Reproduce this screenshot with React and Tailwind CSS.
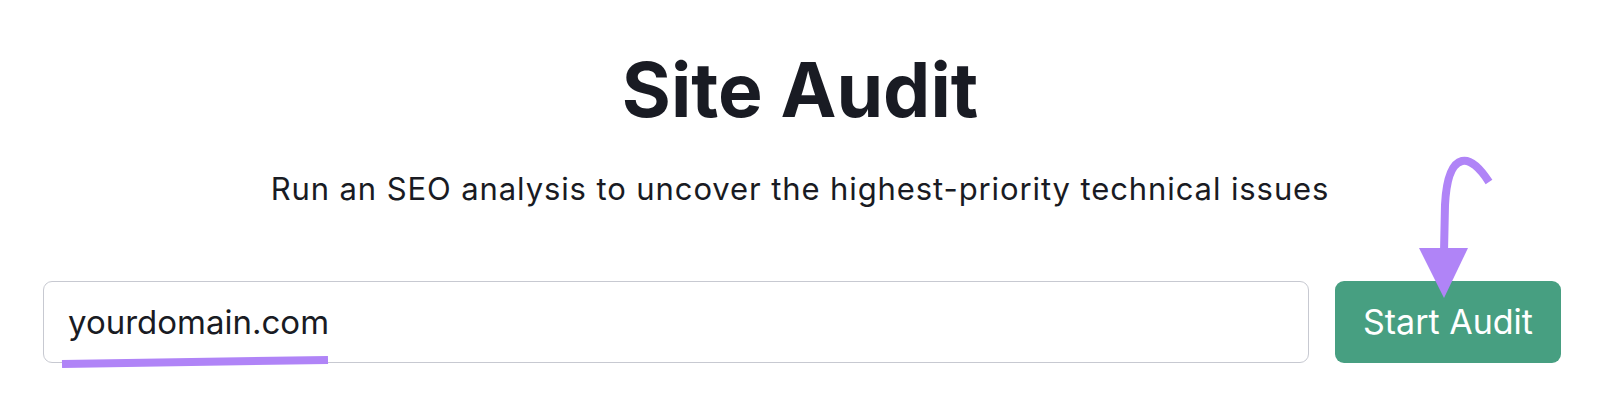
import React from "react";

function App() {
  return (
    <div className="relative w-[1600px] h-[416px] bg-white overflow-hidden font-['Inter',_'Noto_Sans',_sans-serif] text-[#191b23]">
      <div className="flex flex-col items-center">
        <h1 className="mt-[52px] text-[75px] font-bold leading-none">Site Audit</h1>
        <p className="mt-[46px] text-[31px] leading-none tracking-[0.9px]">
          Run an SEO analysis to uncover the highest-priority technical issues
        </p>
      </div>

      <div className="mt-[77px] flex h-[82px] gap-[26px] pl-[43px] pr-[39px]">
        <div className="flex flex-1 items-center rounded-[9px] border-[1.5px] border-[#c7c9d1] pl-[24px]">
          <span className="text-[33px] leading-none">yourdomain.com</span>
        </div>
        <button className="flex w-[226px] items-center justify-center rounded-[9px] bg-[#479f81] text-[34px] leading-none text-white">
          Start Audit
        </button>
      </div>

      {/* annotation overlay */}
      <svg
        className="pointer-events-none absolute inset-0"
        width="1600"
        height="416"
        viewBox="0 0 1600 416"
      >
        <line x1="62" y1="364" x2="328" y2="360" stroke="#b084f7" strokeWidth="8" />
        <path
          d="M1489 182 C1480 168 1470 159 1462 161 C1450 164 1446 185 1445 205 L1444 252"
          fill="none"
          stroke="#b084f7"
          strokeWidth="8"
        />
        <polygon points="1419,248 1468,248 1444,298" fill="#b084f7" />
      </svg>
    </div>
  );
}

export default App;
